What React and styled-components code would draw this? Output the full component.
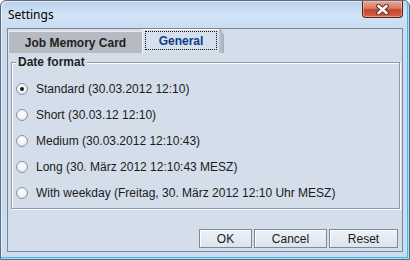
import React, { useState } from 'react';
import styled, { createGlobalStyle } from 'styled-components';

const GlobalStyle = createGlobalStyle`
    html, body {
        margin: 0;
        padding: 0;
        background: #ffffff;
    }
    body {
        font-family: "Liberation Sans", Arial, sans-serif;
        font-size: 12px;
    }
`;

const Window = styled.div`
    width: 410px;
    height: 260px;
    box-sizing: border-box;
    border: 1px solid #5d6b7c;
    border-radius: 6px 6px 0 0;
    padding: 0 6px 7px;
    display: flex;
    flex-direction: column;
    background: linear-gradient(to bottom, #bad2ee 0px, #d2e3f5 14px, #c8dbf1 28px, #cadcf1 100%);
    box-shadow: inset -1px -1px 0 #a8dbf4, inset -2px -2px 0 #3fbde9, inset 1px 1px 0 rgba(255, 255, 255, 0.55);
`;

const TitleBar = styled.div`
    height: 27px;
    display: flex;
    align-items: center;
    padding-left: 1px;
`;

const Title = styled.span`
    font-family: "Noto Sans", "Liberation Sans", sans-serif;
    font-size: 12px;
    color: #000;
    flex: 1;
`;

const CloseButton = styled.div`
    align-self: flex-start;
    width: 41px;
    height: 17px;
    box-sizing: border-box;
    border: 1px solid #4e2320;
    border-top: none;
    border-radius: 0 0 4px 4px;
    background: linear-gradient(to bottom, #e8a898 0%, #d77b66 45%, #c0432c 55%, #d2654d 100%);
    box-shadow: inset 0 0 0 1px rgba(255, 220, 210, 0.45);
    display: flex;
    align-items: center;
    justify-content: center;
`;

const Client = styled.div`
    flex: 1;
    display: flex;
    flex-direction: column;
    border: 1px solid #7b8797;
    background: #d4deea;
`;

const TabRow = styled.div`
    height: 24px;
    display: flex;
    align-items: flex-end;
`;

const Tab = styled.div`
    box-sizing: border-box;
    width: ${({ width }) => width}px;
    height: ${({ selected }) => (selected ? 24 : 22)}px;
    display: flex;
    align-items: center;
    justify-content: center;
    font-weight: bold;
    font-size: 12px;
    color: ${({ selected }) => (selected ? '#0c3d86' : '#1e1e1e')};
    background: ${({ selected }) => (selected ? '#d6e0ec' : '#b6bbc3')};
    border-top: 1px solid ${({ selected }) => (selected ? '#f4f7fb' : '#e6e9ee')};
    border-left: 1px solid ${({ selected }) => (selected ? '#f4f7fb' : '#e6e9ee')};
    position: relative;
    padding-bottom: ${({ selected }) => (selected ? 2 : 0)}px;
    &::after {
        content: '';
        display: ${({ selected }) => (selected ? 'block' : 'none')};
        position: absolute;
        top: -1px;
        right: -5px;
        width: 5px;
        height: 24px;
        background: linear-gradient(to right, #bcc4cf, #a6aeb9);
        clip-path: polygon(0 0, 40% 0, 100% 25%, 100% 100%, 0 100%);
    }
`;

const FocusRing = styled.span`
    box-sizing: border-box;
    width: 72px;
    height: 19px;
    border: 1px dotted #111;
    display: flex;
    align-items: center;
    justify-content: center;
`;

const Panel = styled.div`
    padding: 9px 2px 0 3px;
`;

const TitledBox = styled.div`
    position: relative;
    height: 147px;
    box-sizing: border-box;
    border: 1px solid #8f98a4;
    box-shadow: inset 1px 1px 0 #ffffff, 1px 1px 0 #ffffff;
    padding: 13px 0 2px 4px;
`;

const BoxTitle = styled.span`
    position: absolute;
    top: -8px;
    left: 4px;
    line-height: 14px;
    padding: 0 2px;
    background: #d4deea;
    font-weight: bold;
    color: #1e1e1e;
`;

const RadioRow = styled.label`
    height: 26px;
    display: flex;
    align-items: center;
    gap: 8px;
    color: #1a1a1a;
    cursor: default;
`;

const RadioCircle = styled.span`
    width: 12px;
    height: 12px;
    box-sizing: border-box;
    border-radius: 50%;
    border: 1px solid #8c95a2;
    background: radial-gradient(circle at 50% 40%, #ffffff 0%, #f2f4f7 45%, #cfd5de 100%);
    display: flex;
    align-items: center;
    justify-content: center;
    flex-shrink: 0;
    &::after {
        content: '';
        width: 4px;
        height: 4px;
        border-radius: 50%;
        background: ${({ checked }) => (checked ? '#1a1a1a' : 'transparent')};
    }
`;

const Footer = styled.div`
    margin-top: auto;
    display: flex;
    justify-content: flex-end;
    gap: 2px;
    padding: 0 4px 3px 0;
`;

const Button = styled.button`
    width: ${({ width }) => width}px;
    height: 19px;
    box-sizing: border-box;
    padding: 0;
    border: 1px solid #7d8a9a;
    background: linear-gradient(to bottom, #eef2f8, #dbe3ee);
    box-shadow: inset 1px 1px 0 #ffffff;
    font-family: "Liberation Sans", Arial, sans-serif;
    font-size: 12px;
    color: #1a1a1a;
`;

const formats = [
    'Standard (30.03.2012 12:10)',
    'Short (30.03.12 12:10)',
    'Medium (30.03.2012 12:10:43)',
    'Long (30. März 2012 12:10:43 MESZ)',
    'With weekday (Freitag, 30. März 2012 12:10 Uhr MESZ)',
];

const App = () => {
    const [selected, setSelected] = useState(0);
    return (
        <>
            <GlobalStyle />
            <Window>
                <TitleBar>
                    <Title>Settings</Title>
                    <CloseButton>
                        <svg width="15" height="11" viewBox="0 0 15 11">
                            <path d="M3.5 2 L11.5 9 M11.5 2 L3.5 9" stroke="#5a2a25" strokeWidth="4.6" strokeLinecap="round" />
                            <path d="M3.5 2 L11.5 9 M11.5 2 L3.5 9" stroke="#ffffff" strokeWidth="2.6" strokeLinecap="round" />
                        </svg>
                    </CloseButton>
                </TitleBar>
                <Client>
                    <TabRow>
                        <Tab width={134}>Job Memory Card</Tab>
                        <Tab width={77} selected>
                            <FocusRing>General</FocusRing>
                        </Tab>
                    </TabRow>
                    <Panel>
                        <TitledBox>
                            <BoxTitle>Date format</BoxTitle>
                            {formats.map((label, index) => (
                                <RadioRow key={index} onClick={() => setSelected(index)}>
                                    <RadioCircle checked={selected === index} />
                                    {label}
                                </RadioRow>
                            ))}
                        </TitledBox>
                    </Panel>
                    <Footer>
                        <Button width={53}>OK</Button>
                        <Button width={73}>Cancel</Button>
                        <Button width={69}>Reset</Button>
                    </Footer>
                </Client>
            </Window>
        </>
    );
};

export default App;
